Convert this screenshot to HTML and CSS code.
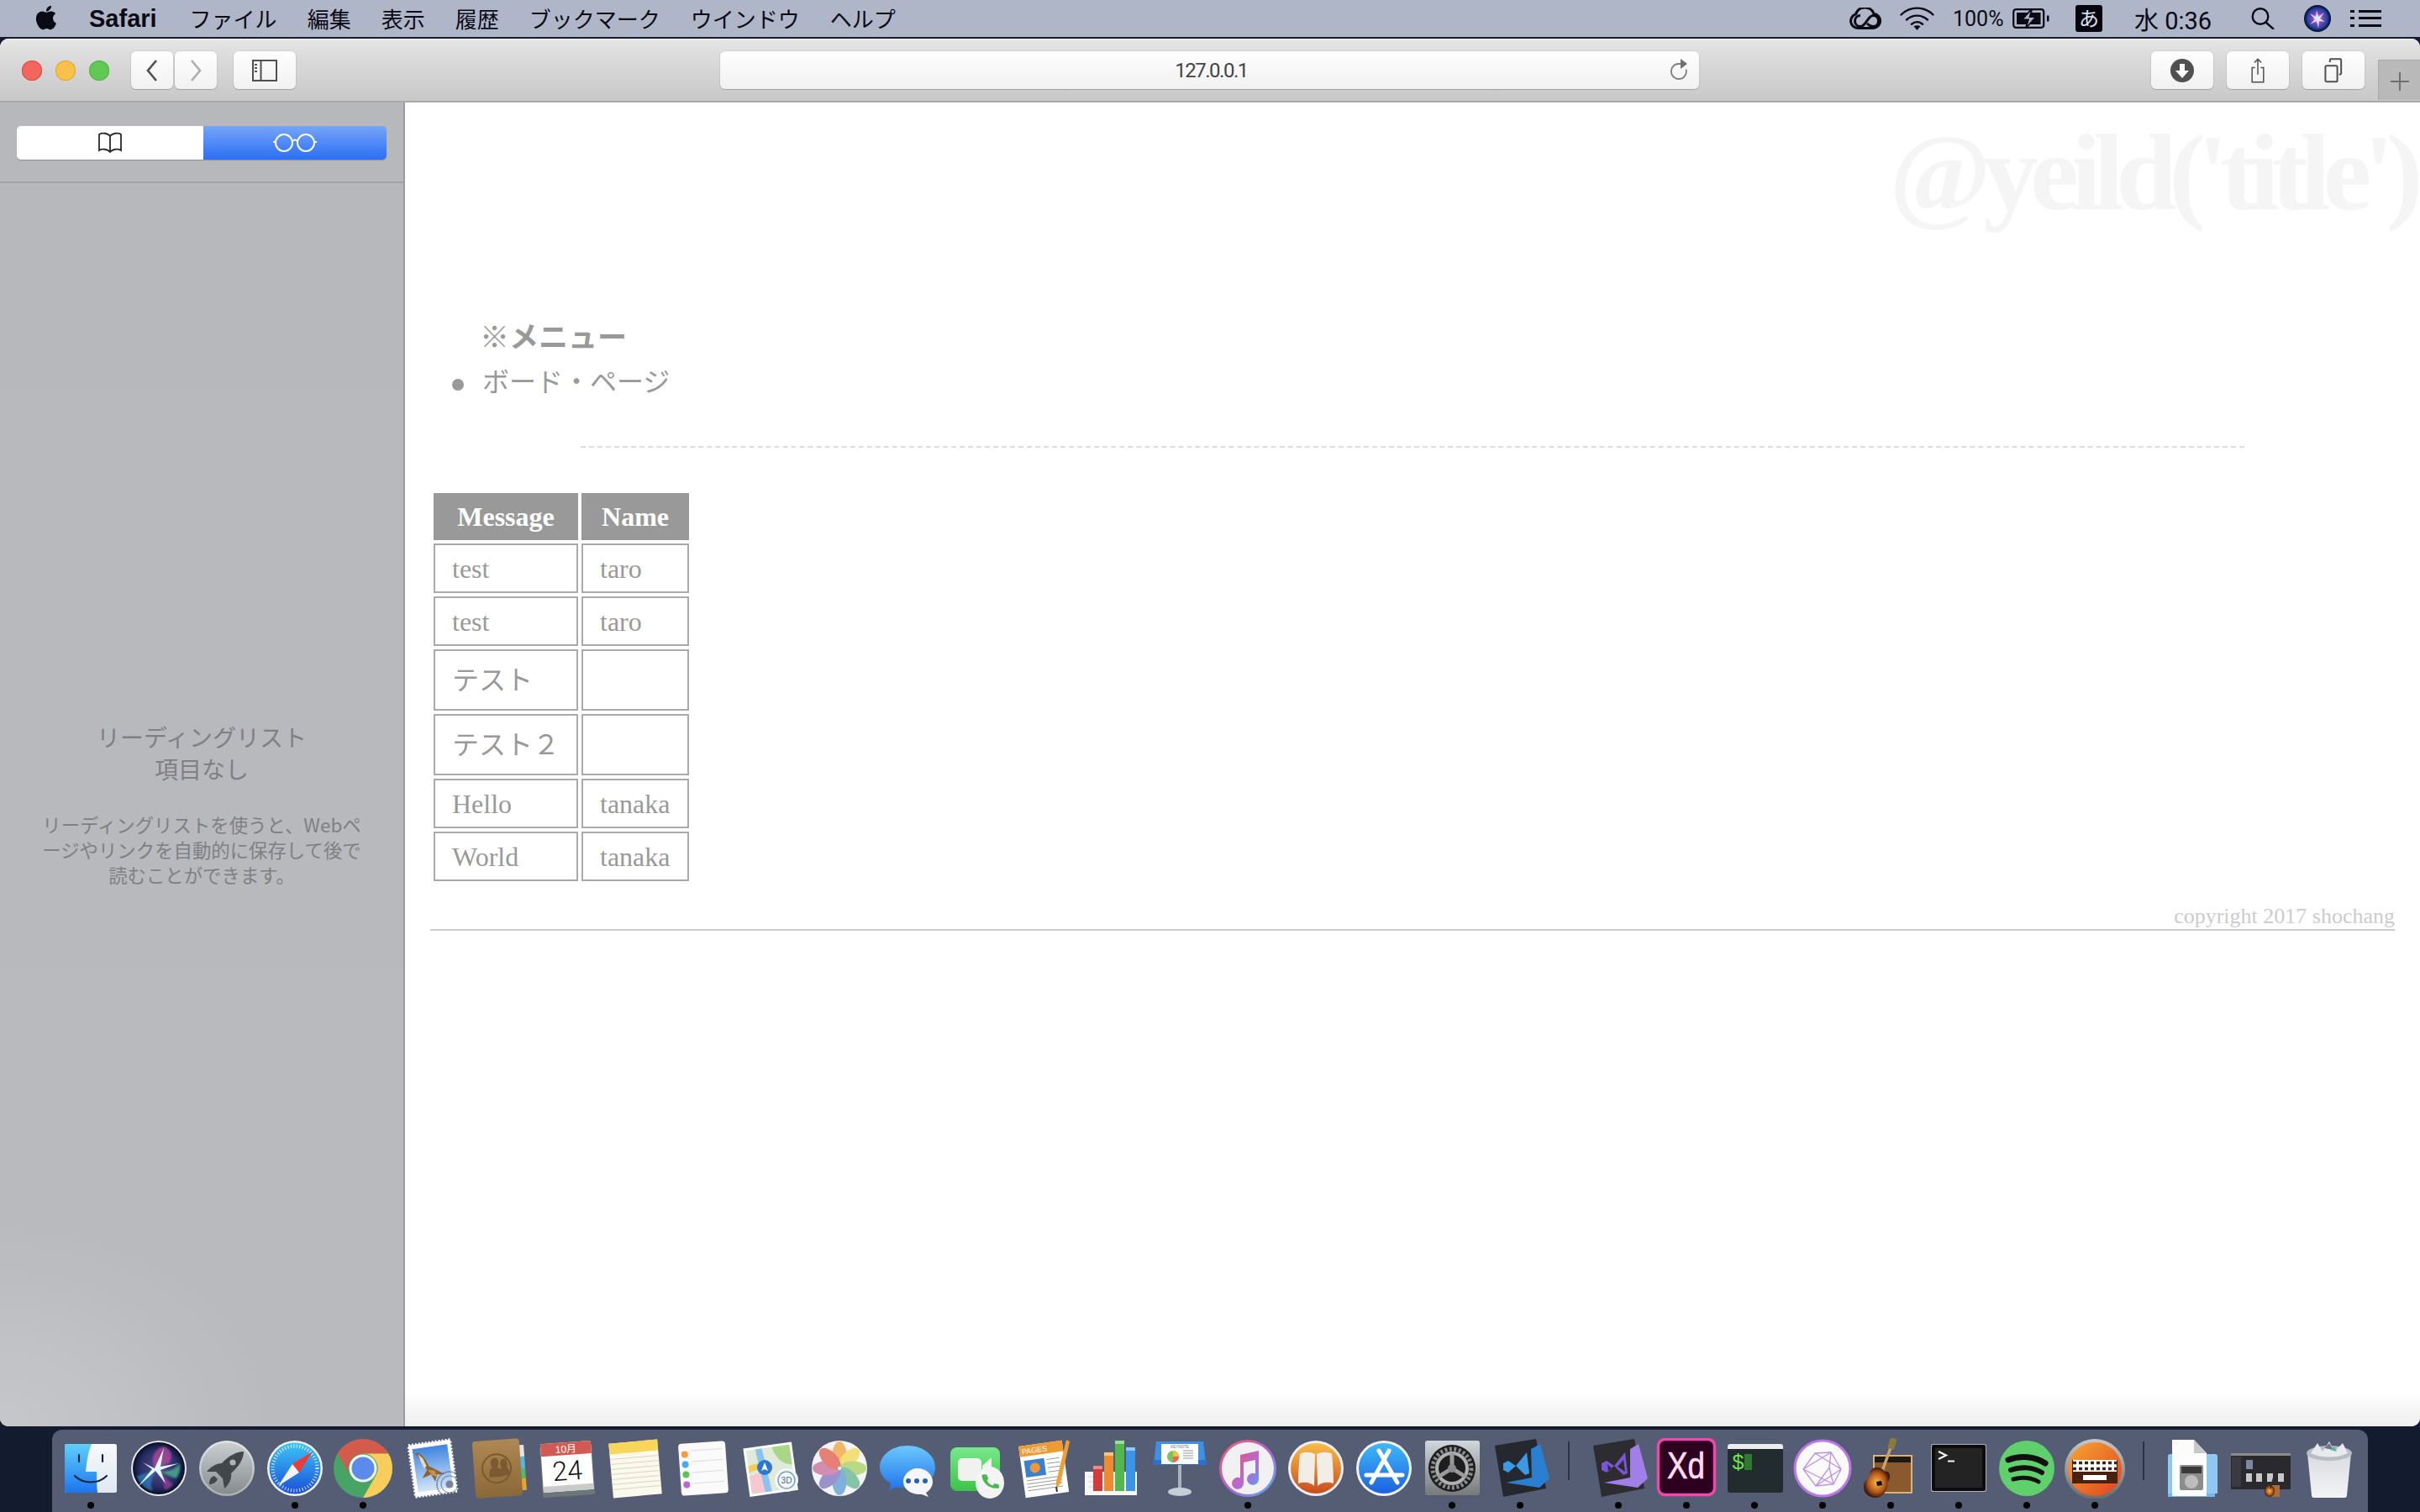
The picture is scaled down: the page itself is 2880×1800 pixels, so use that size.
FILE: index.html
```html
<!DOCTYPE html>
<html lang="ja">
<head>
<meta charset="utf-8">
<title>127.0.0.1</title>
<link rel="stylesheet" href="styles.css">
</head>
<body>
<svg class="defs" aria-hidden="true">
<defs>
<filter id="soft" x="-30%" y="-30%" width="160%" height="160%"><feGaussianBlur stdDeviation="1.2"/></filter>
<filter id="soft2" x="-30%" y="-30%" width="160%" height="160%"><feGaussianBlur stdDeviation=".5"/></filter>
<linearGradient id="fL" x1="0" y1="0" x2="0" y2="1"><stop offset="0" stop-color="#5fd0fb"/><stop offset="1" stop-color="#1d74ee"/></linearGradient>
<linearGradient id="fR" x1="0" y1="0" x2="0" y2="1"><stop offset="0" stop-color="#f7f8fa"/><stop offset="1" stop-color="#dfe8f2"/></linearGradient>
<radialGradient id="siri"><stop offset="0" stop-color="#51508f"/><stop offset=".75" stop-color="#2c2e66"/><stop offset="1" stop-color="#0d1a3d"/></radialGradient>
<linearGradient id="rock" x1="0" y1="0" x2="0" y2="1"><stop offset="0" stop-color="#e3e6e7"/><stop offset="1" stop-color="#a9aeaf"/></linearGradient>
<linearGradient id="rock2" x1="0" y1="0" x2="0" y2="1"><stop offset="0" stop-color="#c9cfd0"/><stop offset="1" stop-color="#868c8e"/></linearGradient>
<linearGradient id="safari" x1="0" y1="0" x2="0" y2="1"><stop offset="0" stop-color="#3cc6f8"/><stop offset="1" stop-color="#1a4fd6"/></linearGradient>
<linearGradient id="sky" x1="0" y1="0" x2="0" y2="1"><stop offset="0" stop-color="#3f85df"/><stop offset="1" stop-color="#d4e6f6"/></linearGradient>
<linearGradient id="brown" x1="0" y1="0" x2="0" y2="1"><stop offset="0" stop-color="#ad8853"/><stop offset="1" stop-color="#8b6838"/></linearGradient>
<linearGradient id="msg" x1="0" y1="0" x2="0" y2="1"><stop offset="0" stop-color="#6cc8fb"/><stop offset="1" stop-color="#1f72ec"/></linearGradient>
<linearGradient id="ft" x1="0" y1="0" x2="0" y2="1"><stop offset="0" stop-color="#78e88a"/><stop offset="1" stop-color="#3cc348"/></linearGradient>
<linearGradient id="itr" x1="0" y1="0" x2="1" y2="1"><stop offset="0" stop-color="#f0635a"/><stop offset=".5" stop-color="#b45fd4"/><stop offset="1" stop-color="#4fb6ee"/></linearGradient>
<linearGradient id="itn" x1="0" y1="0" x2="1" y2="1"><stop offset="0" stop-color="#f1536a"/><stop offset=".6" stop-color="#b36bd6"/><stop offset="1" stop-color="#4aa8f0"/></linearGradient>
<linearGradient id="book" x1="0" y1="0" x2="0" y2="1"><stop offset="0" stop-color="#f8bd48"/><stop offset="1" stop-color="#c94c1e"/></linearGradient>
<linearGradient id="app" x1="0" y1="0" x2="0" y2="1"><stop offset="0" stop-color="#3fb8f8"/><stop offset="1" stop-color="#1c62e0"/></linearGradient>
<linearGradient id="sys" x1="0" y1="0" x2="0" y2="1"><stop offset="0" stop-color="#cfd8db"/><stop offset="1" stop-color="#77797b"/></linearGradient>
<linearGradient id="kb" x1="0" y1="0" x2="1" y2="1"><stop offset="0" stop-color="#f6a833"/><stop offset="1" stop-color="#e0401f"/></linearGradient>
<linearGradient id="kbr" x1="0" y1="0" x2="0" y2="1"><stop offset="0" stop-color="#c8c8c8"/><stop offset="1" stop-color="#6a6a6a"/></linearGradient>
<linearGradient id="trash" x1="0" y1="0" x2="0" y2="1"><stop offset="0" stop-color="#d8dbe0"/><stop offset="1" stop-color="#f4f4f5"/></linearGradient>
<radialGradient id="guitar"><stop offset="0" stop-color="#f5bb45"/><stop offset=".65" stop-color="#b5561c"/><stop offset="1" stop-color="#3a1a0a"/></radialGradient>
<radialGradient id="msiri"><stop offset="0" stop-color="#a9d8ee"/><stop offset=".4" stop-color="#8a3fb8"/><stop offset=".72" stop-color="#2446a8"/><stop offset="1" stop-color="#05071c"/></radialGradient>
</defs>
</svg>

<header class="menubar">
  <svg class="apple" viewBox="0 0 24 24"><path d="M17.05 20.28c-.98.95-2.05.8-3.08.35-1.09-.46-2.09-.48-3.24 0-1.44.62-2.2.44-3.06-.35C2.79 15.25 3.51 7.59 9.05 7.31c1.35.07 2.29.74 3.08.8 1.18-.24 2.31-.93 3.57-.84 1.51.12 2.65.72 3.4 1.8-3.12 1.87-2.38 5.98.48 7.13-.57 1.5-1.31 2.99-2.54 4.09zM12.03 7.25c-.15-2.23 1.66-4.07 3.74-4.25.29 2.58-2.34 4.5-3.74 4.25z"/></svg>
  <nav class="menu-left">
    <span class="app-name">Safari</span>
    <span>ファイル</span><span>編集</span><span>表示</span><span>履歴</span><span>ブックマーク</span><span>ウインドウ</span><span>ヘルプ</span>
  </nav>
  <div class="menu-right">
    <svg class="st-cc" viewBox="0 0 38 26" fill="none" stroke="#0a0a14" stroke-width="3"><path d="M10 24.500a8.500 8.500 0 0 1-2.500-16.600A11.500 11.500 0 0 1 29 7.200a8.700 8.700 0 0 1-.5 17.300z"/><path d="M13 9.500c-4 0-6.500 3-6.500 6.500S9 22.500 13 22.500c6.500 0 9-13 15-13 4 0 6.500 3 6.500 6.500S32 22.500 28 22.500c-3 0-5-1.500-7-3.500"/></svg>
    <svg class="st-wifi" viewBox="0 0 41 28" fill="none" stroke="#0a0a14" stroke-width="2.400" stroke-linecap="round"><path d="M1.500 9.500C12 -1 29 -1 39.500 9.500"/><path d="M8 15.500c7-6.500 18-6.500 25 0"/><path d="M14 20.800c4-3.300 9-3.300 13 0"/><path d="M20.500 28l-4-4.800c2.500-1.400 5.500-1.400 8 0z" fill="#0a0a14" stroke="none"/></svg>
    <span class="st-pct">100%</span>
    <svg class="st-batt" viewBox="0 0 44 24" fill="none" stroke="#0a0a14" stroke-width="2.200"><rect x="1.200" y="1.200" width="36" height="21.600" rx="3"/><rect x="5" y="5" width="28.500" height="14" fill="#0a0a14" stroke="none"/><path d="M41 8.500h2.500v7H41z" fill="#0a0a14" stroke="none"/><path d="M23.500 0L11.500 13.500h7.500L15.500 24 28 10h-7.500z" fill="#afb6c8" stroke="#0a0a14" stroke-width="1.800"/></svg>
    <span class="st-ime">あ</span>
    <span class="st-time">水 0:36</span>
    <svg class="st-search" viewBox="0 0 30 26" fill="none" stroke="#0a0a14" stroke-width="2.400"><circle cx="12" cy="10.500" r="9.300"/><path d="M18.500 17.500L28 26"/></svg>
    <svg class="st-siri" viewBox="0 0 32 32"><circle cx="16" cy="16" r="16" fill="url(#msiri)"/><path d="M15 6l2 8 7-5-5 7 6 4-7-1-1 9-2-9-8 4 6-6-6-7 7 4z" fill="#e8f4fa" opacity=".85" filter="url(#soft2)"/></svg>
    <svg class="st-list" viewBox="0 0 37 20" fill="#0a0a14"><rect x="0" y="0" width="5" height="3"/><rect x="10" y="0" width="27" height="3"/><rect x="0" y="8" width="5" height="3"/><rect x="10" y="8" width="27" height="3"/><rect x="0" y="17" width="5" height="3"/><rect x="10" y="17" width="27" height="3"/></svg>
  </div>
</header>

<div class="window">
  <div class="toolbar">
    <i class="light red"></i><i class="light yellow"></i><i class="light green"></i>
    <button class="tb back"><svg viewBox="0 0 16 26" fill="none" stroke="#505050" stroke-width="2.600"><path d="M13 1L3 13l10 12"/></svg></button>
    <button class="tb forward"><svg viewBox="0 0 16 26" fill="none" stroke="#adadad" stroke-width="2.600"><path d="M3 1l10 12L3 25"/></svg></button>
    <button class="tb toggle"><svg viewBox="0 0 30 26" fill="none" stroke="#505050" stroke-width="2"><rect x="1" y="1" width="28" height="24"/><path d="M10.500 1v24"/><path d="M3 6h5M3 10h5M3 14h5" stroke-dasharray="3 2"/></svg></button>
    <div class="url">
      <span class="url-text">127.0.0.1</span>
      <svg class="reload" viewBox="0 0 22 26" fill="none" stroke="#808080" stroke-width="1.800"><path d="M18.500 12.500a9 9 0 1 1-9-6.500h3"/><path d="M12 0l8 6-8 6z" fill="#707070" stroke="none"/></svg>
    </div>
    <div class="tb-right">
      <button class="tb wide"><svg viewBox="0 0 28 28"><circle cx="14" cy="14" r="14" fill="#505050"/><path d="M11 6h6v8h5l-8 9-8-9h5z" fill="#fff"/></svg></button>
      <button class="tb wide"><svg viewBox="0 0 24 44" fill="none" stroke="#505050" stroke-width="2.200"><path d="M7 17H2v25h20V17h-5"/><path d="M12 29V2M6 8l6-6 6 6"/></svg></button>
      <button class="tb wide"><svg viewBox="0 0 26 36" fill="none" stroke="#505050" stroke-width="2.400"><rect x="1.500" y="11" width="17" height="23" rx="2"/><path d="M8 6V3a1.500 1.500 0 0 1 1.500-1.500h13A1.500 1.500 0 0 1 24 3v19a1.500 1.500 0 0 1-1.500 1.500H21"/></svg></button>
    </div>
    <div class="newtab"><svg viewBox="0 0 24 24" fill="none" stroke="#6f6f6f" stroke-width="2"><path d="M12 1v22M1 12h22"/></svg></div>
  </div>

  <div class="content">
    <aside class="sidebar">
      <div class="side-head">
        <div class="segment">
          <div class="seg seg-on"><svg viewBox="0 0 32 26" fill="none" stroke="#2a2a2a" stroke-width="1.800"><path d="M16 5C13 1 6 1 3 3v19c3-2 10-2 13 2 3-4 10-4 13-2V3c-3-2-10-2-13 2z"/><path d="M16 5v19"/></svg></div>
          <div class="seg seg-blue"><svg viewBox="0 0 52 24" fill="none" stroke="#fff" stroke-width="2"><circle cx="13" cy="12" r="10"/><circle cx="39" cy="12" r="10"/><path d="M23 10q3-3 6 0M0 11h3M49 11h3"/></svg></div>
        </div>
      </div>
      <div class="empty">
        <p class="empty-title">リーディングリスト<br>項目なし</p>
        <p class="empty-desc">リーディングリストを使うと、Webペ<br>ージやリンクを自動的に保存して後で<br>読むことができます。</p>
      </div>
    </aside>

    <main class="page">
      <h1 class="ghost">@yeild('title')</h1>
      <section class="nav-block">
        <h3 class="nav-title">※メニュー</h3>
        <ul class="nav-list"><li>ボード・ページ</li></ul>
      </section>
      <hr class="dash">
      <table class="board">
        <thead><tr><th class="col-msg">Message</th><th class="col-name">Name</th></tr></thead>
        <tbody>
          <tr><td>test</td><td>taro</td></tr>
          <tr><td>test</td><td>taro</td></tr>
          <tr class="tall"><td>テスト</td><td></td></tr>
          <tr class="tall"><td>テスト２</td><td></td></tr>
          <tr><td>Hello</td><td>tanaka</td></tr>
          <tr><td>World</td><td>tanaka</td></tr>
        </tbody>
      </table>
      <footer class="copy">copyright 2017 shochang</footer>
    </main>
  </div>
</div>

<div class="dock">
  <div class="item on"><svg viewBox="0 0 72 72"><rect x="5" y="7" width="62" height="58" rx="2.500" fill="url(#fR)"/><path d="M7.500 7H37C33 16 31 29 30 40h13c0 9 0 17 1 25H7.500A2.500 2.500 0 0 1 5 62.500v-53A2.500 2.500 0 0 1 7.500 7z" fill="url(#fL)"/><path d="M22 20v8M50 20v8M17 45c10 10 28 10 38 0" fill="none" stroke="#16283f" stroke-width="2.200" stroke-linecap="round"/></svg></div>
  <div class="item"><svg viewBox="0 0 72 72"><circle cx="36" cy="36" r="33" fill="#e9e9ea"/><circle cx="36" cy="36" r="31" fill="#0f1226"/><circle cx="36" cy="36" r="29" fill="url(#siri)"/><g filter="url(#soft)"><path d="M31 36C26 24 30 13 42 10c9 3 12 12 6 20z" fill="#b0479c" opacity=".8"/><path d="M33 38c8 4 20 2 28-8 1 8-1 14-5 18z" fill="#49b98d" opacity=".75"/><path d="M33 38c-6 10-8 18-4 25-8-2-16-8-19-18z" fill="#2e7fbf" opacity=".75"/><path d="M33 38c6 6 9 15 10 24 4-1 8-4 10-7z" fill="#9c3f9c" opacity=".7"/></g><path d="M31 36L42 12l-4 22 22-4-22 8 6 16-12-15-21 19 17-21-11-8z" fill="#e4f6fa" filter="url(#soft2)"/></svg></div>
  <div class="item"><svg viewBox="0 0 72 72"><circle cx="36" cy="36" r="33" fill="url(#rock)"/><circle cx="36" cy="36" r="30.500" fill="url(#rock2)"/><path d="M56 16C48 16 38 21 30 30 24 30 17 34 12 40h11l8 8 2 12c6-5 9-12 8-18C50 34 56 25 56 16z" fill="#43464b"/><path d="M21 45c-4 1-6 5-6 10 4 0 8-2 10-6z" fill="#43464b"/><circle cx="43" cy="29" r="3.600" fill="#aeb4b6"/></svg></div>
  <div class="item on"><svg viewBox="0 0 72 72"><circle cx="36" cy="36" r="33" fill="#f2f3f4"/><circle cx="36" cy="36" r="30.500" fill="url(#safari)"/><circle cx="36" cy="36" r="26.500" fill="none" stroke="#fff" stroke-width="4" stroke-dasharray="1 2.500" opacity=".85"/><path d="M57 16L33 31l8 10z" fill="#ee3b36"/><path d="M16 57l17-26 8 10z" fill="#f4f4f4"/></svg></div>
  <div class="item on"><svg viewBox="0 0 72 72"><circle cx="36" cy="36" r="35" fill="#48a465"/><path d="M5.700 18.500A35 35 0 0 1 66.300 18.500H36a17.500 17.500 0 0 0-15.200 26.200z" fill="#d25b4b"/><path d="M66.300 18.500A35 35 0 0 1 36 71L51.200 44.800A17.500 17.500 0 0 0 36 18.500z" fill="#f9cd5c"/><circle cx="36" cy="36" r="16.500" fill="#f5f5f5"/><circle cx="36" cy="36" r="13.500" fill="#5b8cec"/></svg></div>
  <div class="item"><svg viewBox="0 0 72 72"><g transform="rotate(-8 38 36)"><rect x="13" y="5" width="50" height="62" fill="#fff" stroke="#fff" stroke-width="3" stroke-dasharray="2 2"/><rect x="17" y="10" width="42" height="52" fill="url(#sky)"/><path d="M19 15l6 1 5 7 4 10 9 6 8 6-9-1-3 8-4-9-11 3 7-9-5-10-4-8z" fill="#8c6434"/><path d="M23 17l5 6 3 9-3 3-3-9z" fill="#e8dcc4"/><path d="M32 37l8 2 2 8-6-3z" fill="#c2914e"/></g><circle cx="58" cy="55" r="15" fill="none" stroke="#535d79" stroke-width="2" stroke-dasharray="1.500 1" opacity=".8"/><circle cx="58" cy="55" r="10" fill="none" stroke="#535d79" stroke-width="1.200" opacity=".6"/><circle cx="58" cy="55" r="4.500" fill="#535d79" opacity=".7"/></svg></div>
  <div class="item"><svg viewBox="0 0 72 72"><g transform="rotate(-4 36 36)"><rect x="58" y="10" width="9" height="14" fill="#e4e4e4"/><rect x="58" y="24" width="9" height="14" fill="#55b8dd"/><rect x="58" y="38" width="9" height="12" fill="#54b870"/><rect x="58" y="50" width="9" height="14" fill="#e8a42c"/><rect x="6" y="2" width="56" height="68" rx="4" fill="url(#brown)"/><circle cx="33" cy="36" r="17" fill="none" stroke="#7a5a2e" stroke-width="2"/><path d="M24 46c0-8 1-10 4-11-3-5-2-12 3-12s6 7 3 12c3 1 5 3 5 11z" fill="#7a5a2e"/><path d="M36 46c0-7 1-9 3-10-2-4-2-11 3-11 4 0 5 7 3 11 2 1 3 3 3 8z" fill="#7a5a2e"/></g></svg></div>
  <div class="item"><svg viewBox="0 0 72 72"><g transform="rotate(-4 36 36)"><rect x="5" y="8" width="62" height="61" rx="2" fill="#6d7779"/><rect x="6" y="5" width="60" height="58" fill="#fff"/><rect x="6" y="5" width="60" height="15" fill="#d35a52"/><text class="ic-sans" x="36" y="17" font-size="12" fill="#fff" text-anchor="middle">10月</text><text class="ic-thin" x="36" y="50" font-size="32" fill="#111" text-anchor="middle">24</text><rect x="6" y="56" width="60" height="7" fill="#c9cbcb"/></g></svg></div>
  <div class="item"><svg viewBox="0 0 72 72"><g transform="rotate(-5 36 36)"><rect x="7" y="4" width="58" height="65" fill="#fbf8ec"/><rect x="7" y="4" width="58" height="13" fill="#f7d65a"/><path d="M7 23h58M7 29h58M7 35h58M7 41h58M7 47h58M7 53h58M7 59h58" stroke="#d8d4c8" stroke-width="1"/></g></svg></div>
  <div class="item"><svg viewBox="0 0 72 72"><g transform="rotate(-4 36 36)"><rect x="8" y="5" width="56" height="62" rx="4" fill="#fafafa"/><path d="M22 14h38M22 27h38M22 40h38M22 53h38" stroke="#dcdcdc" stroke-width="1"/><circle cx="15" cy="18" r="4" fill="#f79a3e"/><circle cx="15" cy="30" r="4" fill="#4aa8ec"/><circle cx="15" cy="42" r="4" fill="#5ec45a"/><circle cx="15" cy="54" r="4" fill="#b26ad8"/></g></svg></div>
  <div class="item"><svg viewBox="0 0 72 72"><g transform="rotate(-8 36 36)"><rect x="6" y="8" width="58" height="58" fill="#fff"/><rect x="9" y="11" width="52" height="52" fill="#dfeadb"/><path d="M40 11h21v24C50 33 42 24 40 11z" fill="#a9d787"/><path d="M9 42l16-4 3 25H9z" fill="#f7c8d0"/><path d="M20 11h8l5 52h-8z" fill="#8cc3ee"/><path d="M9 30c10-4 22-2 28 6l-3 5c-7-6-16-7-25-3z" fill="#f6cb57"/></g><circle cx="28" cy="35" r="9" fill="#2a78d2"/><path d="M28 29l4 10-4-2-4 2z" fill="#fff"/><circle cx="54" cy="50" r="14" fill="#f3f5f6"/><circle cx="54" cy="50" r="10" fill="none" stroke="#7aa4c0" stroke-width="1.500"/><text class="ic-sans" x="54" y="54" font-size="10" fill="#47708c" text-anchor="middle">3D</text></svg></div>
  <div class="item"><svg viewBox="0 0 72 72"><circle cx="36" cy="36" r="33" fill="#f4f4f4"/><g opacity=".75"><ellipse cx="36" cy="20" rx="8.500" ry="16" fill="#f0a23c"/><ellipse cx="36" cy="20" rx="8.500" ry="16" fill="#f4d84e" transform="rotate(45 36 36)"/><ellipse cx="36" cy="20" rx="8.500" ry="16" fill="#a8cf5c" transform="rotate(90 36 36)"/><ellipse cx="36" cy="20" rx="8.500" ry="16" fill="#62b58e" transform="rotate(135 36 36)"/><ellipse cx="36" cy="20" rx="8.500" ry="16" fill="#5a9bd6" transform="rotate(180 36 36)"/><ellipse cx="36" cy="20" rx="8.500" ry="16" fill="#7c72c0" transform="rotate(225 36 36)"/><ellipse cx="36" cy="20" rx="8.500" ry="16" fill="#c86a9c" transform="rotate(270 36 36)"/><ellipse cx="36" cy="20" rx="8.500" ry="16" fill="#e2594c" transform="rotate(315 36 36)"/></g><circle cx="36" cy="36" r="2" fill="#fff"/></svg></div>
  <div class="item"><svg viewBox="0 0 72 72"><path d="M36 11c18 0 33 11 33 26 0 11-8 20-18 24H20l-7 4c2-3 3-6 3-9C8 51 3 44 3 37c0-15 15-26 33-26z" transform="translate(0 -2)" fill="url(#msg)"/><path d="M48 36c10 0 18 7 18 16 0 5-3 10-8 13l3 5-8-3c-11 1-22-5-22-15 0-9 8-16 17-16z" fill="#f4f6f9"/><circle cx="37" cy="51" r="3" fill="#2b5fa8"/><circle cx="47" cy="51" r="3" fill="#2b5fa8"/><circle cx="57" cy="51" r="3" fill="#2b5fa8"/></svg></div>
  <div class="item"><svg viewBox="0 0 72 72"><rect x="6" y="11" width="59" height="52" rx="8" fill="url(#ft)"/><rect x="15" y="24" width="28" height="27" rx="5" fill="#f0f2f0"/><path d="M44 33l11-10v32L44 45z" fill="#f0f2f0"/><ellipse cx="53" cy="53" rx="17" ry="19" fill="#f3f4f3"/><path d="M47 42l4 1 1 5-2 2c1 3 3 6 6 7l2-2 5 2v4c-10 1-19-8-18-18z" transform="rotate(-10 53 53)" fill="#47b94e"/></svg></div>
  <div class="item"><svg viewBox="0 0 72 72"><g transform="rotate(-8 36 36)"><rect x="10" y="6" width="52" height="62" fill="#fff"/><rect x="10" y="6" width="52" height="13" fill="#f09a34"/><text class="ic-sans" x="13" y="16" font-size="9" fill="#fff">PAGES</text><rect x="14" y="24" width="24" height="20" fill="#3a80cf"/><circle cx="26" cy="34" r="6" fill="#f2963a"/><path d="M14 48h42M14 52h42M14 56h42M14 60h42M41 26h15M41 31h15M41 36h15M41 41h15" stroke="#9a9a9a" stroke-width="1"/></g><path d="M63 2l4 2-11 50-5 6 0-8z" fill="#f0a030"/><path d="M51 58l1 6" stroke="#333" stroke-width="2"/></svg></div>
  <div class="item"><svg viewBox="0 0 72 72"><path d="M4 40h62v28H4z" fill="#f7f7f7"/><path d="M8 46h56M8 52h56M8 58h56" stroke="#d6d6d6"/><rect x="14" y="36" width="11" height="27" fill="#d43c3c"/><rect x="14" y="33" width="11" height="4" fill="#ef8b82"/><rect x="27" y="20" width="11" height="43" fill="#ee8a2f"/><rect x="27" y="17" width="11" height="4" fill="#f8c47c"/><rect x="40" y="6" width="11" height="57" fill="#52b84e"/><rect x="40" y="3" width="11" height="4" fill="#9be08d"/><rect x="53" y="14" width="11" height="49" fill="#3c94e8"/><rect x="53" y="11" width="11" height="4" fill="#8cc8f8"/></svg></div>
  <div class="item"><svg viewBox="0 0 72 72"><path d="M8 4h56l3 26H5z" fill="#3e8fe6"/><rect x="4" y="26" width="64" height="6" rx="1" fill="#2a70cc"/><rect x="14" y="7" width="44" height="24" fill="#fdfdfd"/><text class="ic-sans" x="36" y="11.500" font-size="4.500" fill="#777" text-anchor="middle">KEYNOTE</text><circle cx="28" cy="22" r="7" fill="#7cc35c"/><path d="M28 22v-7a7 7 0 0 1 7 7z" fill="#f0c040"/><path d="M28 22h7a7 7 0 0 1-7 7z" fill="#e8645a"/><path d="M40 15h12M40 18h12M40 21h12M40 24h12" stroke="#bbb" stroke-width="1.500"/><rect x="34" y="32" width="4" height="30" fill="#a8b3bd"/><ellipse cx="36" cy="64" rx="14" ry="5" fill="#c3ced6"/></svg></div>
  <div class="item on"><svg viewBox="0 0 72 72"><circle cx="36" cy="36" r="34" fill="url(#itr)"/><circle cx="36" cy="36" r="31" fill="#f1f0f3"/><path d="M27 20l22-5v34a7 7 0 1 1-4-6.500V26l-14 3v25a7 7 0 1 1-4-6.500z" fill="url(#itn)"/></svg></div>
  <div class="item"><svg viewBox="0 0 72 72"><circle cx="36" cy="36" r="33" fill="#f1f1f1"/><circle cx="36" cy="36" r="30" fill="url(#book)"/><path d="M35 19c-6-3-14-3-18 0-1 9-2 24-2 35 6-2 14-2 19 3 0-13 1-25 1-38zM37 19c6-3 14-3 18 0 1 9 2 24 2 35-6-2-14-2-19 3 0-13-1-25-1-38z" fill="#f2ede6"/></svg></div>
  <div class="item"><svg viewBox="0 0 72 72"><circle cx="36" cy="36" r="33" fill="#f4f4f6"/><circle cx="36" cy="36" r="30" fill="url(#app)"/><path d="M30 15l22 38M42 15L21 53M15 44h42M48 44h10" fill="none" stroke="#fff" stroke-width="5" stroke-linecap="round"/></svg></div>
  <div class="item on"><svg viewBox="0 0 72 72"><rect x="4" y="3" width="65" height="65" rx="3" fill="url(#sys)"/><circle cx="36" cy="36" r="28" fill="#1e1e20"/><circle cx="36" cy="36" r="23" fill="none" stroke="#8b8b8b" stroke-width="5" stroke-dasharray="3 2.500"/><circle cx="36" cy="36" r="18" fill="none" stroke="#b0b0b0" stroke-width="4"/><path d="M36 36V18M36 36L20 46M36 36l16 10" stroke="#9a9a9a" stroke-width="5"/><circle cx="36" cy="36" r="5" fill="#8a8a8a"/></svg></div>
  <div class="item on"><svg viewBox="0 0 72 72"><path d="M6 9l49-8 12 59-51 10z" fill="#25282e"/><path d="M49 13l11-6 11 41-12 11-40-6 31-6z" fill="#2a7fd1"/><path d="M16 30l6-3 9 6 13-16 3 25-5 2-11-11-9 8-6-3z" fill="#3b99e6"/></svg></div>
  <div class="sep"></div>
  <div class="item on"><svg viewBox="0 0 72 72"><path d="M6 9l49-8 12 59-51 10z" fill="#2c2c31"/><path d="M50 13l10-6 11 41-12 11-40-6 31-6z" fill="#a27fe8"/><path d="M16 30l6-3 9 6 13-16 3 25-5 2-11-11-9 8-6-3zM23 31l5 5-4 4zM42 26l-7 8 9 6z" fill="#7a56d6" fill-rule="evenodd"/></svg></div>
  <div class="item on"><svg viewBox="0 0 72 72"><rect x="2.500" y="1.500" width="67" height="66" rx="8" fill="#2c001e" stroke="#ef47ae" stroke-width="3.500"/><text class="ic-sans" x="13" y="48" font-size="45" fill="#ffdcf2" stroke="#ffdcf2" stroke-width=".7" textLength="45" lengthAdjust="spacingAndGlyphs">Xd</text></svg></div>
  <div class="item on"><svg viewBox="0 0 72 72"><rect x="4" y="7" width="66" height="58" rx="3" fill="#222c2e"/><path d="M4 10a3 3 0 0 1 3-3h60a3 3 0 0 1 3 3v3H4z" fill="#ececec"/><text class="ic-mono" x="9" y="37" font-size="25" fill="#6fe34b">$</text><rect x="24" y="19" width="9" height="19" fill="#2f7a2f"/></svg></div>
  <div class="item on"><svg viewBox="0 0 72 72"><circle cx="36" cy="36" r="33" fill="#fafafa" stroke="#bd74e8" stroke-width="3"/><path d="M27 18L46 17 58 37 49 55 28 57 13 37zM13 37L46 17M27 18L58 37M28 57L58 37M13 37L49 55M46 17L44 35 28 57M44 35L49 55" fill="none" stroke="#bb8fe6" stroke-width="1.300"/></svg></div>
  <div class="item on"><svg viewBox="0 0 72 72"><rect x="16" y="21" width="45" height="44" fill="#8a5a2e" stroke="#d9b27c" stroke-width="2"/><rect x="17" y="22" width="43" height="7" fill="#1f1a14"/><path d="M25 42L37 9" stroke="#c9a46a" stroke-width="3.500"/><rect x="34" y="0" width="8" height="13" fill="#8a7a3a" transform="rotate(15 38 6)"/><path d="M19 35c5 0 8 2 10 5 4-1 6 2 6 5 0 4-1 6-3 8 1 6-3 17-13 18C10 71 4 66 4 58c0-6 3-9 7-11-1-6 2-12 8-12z" fill="url(#guitar)"/><path d="M19 52l6-1 1 5-6 1z" fill="#111"/></svg></div>
  <div class="item on"><svg viewBox="0 0 72 72"><rect x="3" y="7" width="66" height="57" rx="2.500" fill="#aab0bc"/><rect x="4" y="8" width="64" height="55" rx="2" fill="#0c0c0c"/><rect x="8" y="12" width="56" height="47" fill="#232323"/><path d="M12 16l9 4.500-9 4.500" fill="none" stroke="#f4f4f4" stroke-width="2.200"/><path d="M23 27.500h8" stroke="#f4f4f4" stroke-width="2"/></svg></div>
  <div class="item on"><svg viewBox="0 0 72 72"><ellipse cx="36" cy="36" rx="33" ry="33" fill="#5fd06c"/><path d="M14 26c15-6 32-4 44 4" fill="none" stroke="#111" stroke-width="7" stroke-linecap="round"/><path d="M17 38c13-5 27-3 37 3" fill="none" stroke="#111" stroke-width="6" stroke-linecap="round"/><path d="M20 49c10-3 22-2 30 3" fill="none" stroke="#111" stroke-width="5" stroke-linecap="round"/></svg></div>
  <div class="item on"><svg viewBox="0 0 72 72"><circle cx="36" cy="37" r="36" fill="url(#kbr)"/><circle cx="36" cy="37" r="32" fill="url(#kb)"/><rect x="9" y="26" width="54" height="28" fill="#4a2010"/><rect x="10" y="26" width="52" height="14" fill="#fff"/><path d="M10 29.500h52M10 36.500h52" stroke="#4a2010" stroke-width="3.500" stroke-dasharray="4 3"/><rect x="22" y="44" width="28" height="6" fill="#fff"/></svg></div>
  <div class="sep"></div>
  <div class="item"><svg viewBox="0 0 72 72"><path d="M6 20h56v50H6z" fill="#73b6ec"/><path d="M6 22a3 3 0 0 1 3-3h53a3 3 0 0 1 3 3v44H6z" fill="#90c8f2"/><path d="M11 2h26l15 16v51H11z" fill="#fcfcfc"/><path d="M37 2v16h15z" fill="#c8c8c8"/><rect x="20" y="32" width="28" height="30" rx="2" fill="#8c8c8c"/><rect x="22" y="34" width="24" height="8" fill="#3a3a3a"/><circle cx="34" cy="52" r="8" fill="#bdbdbd"/></svg></div>
  <div class="item"><svg viewBox="0 0 72 72"><rect x="0" y="18" width="71" height="43" fill="#2a2a2e"/><rect x="0" y="18" width="71" height="3" fill="#8c8c8c"/><rect x="1" y="22" width="11" height="36" fill="#3a3a42"/><rect x="18" y="26" width="8" height="11" fill="#7a8aa0"/><rect x="18" y="42" width="7" height="10" fill="#c8c8c8"/><rect x="30" y="42" width="7" height="10" fill="#c8c8c8"/><rect x="43" y="42" width="7" height="10" fill="#c8c8c8"/><rect x="56" y="42" width="7" height="10" fill="#c8c8c8"/><rect x="44" y="56" width="14" height="14" fill="#a76e3c"/><ellipse cx="46" cy="63" rx="6" ry="7" fill="url(#guitar)"/><path d="M47 60l4-14" stroke="#3a2a1a" stroke-width="1.500"/></svg></div>
  <div class="item"><svg viewBox="0 0 72 72"><path d="M10 18h52l-5 50a3 3 0 0 1-3 3H18a3 3 0 0 1-3-3z" fill="url(#trash)"/><ellipse cx="36" cy="18" rx="27" ry="9" fill="#b9bdc4"/><path d="M14 18l8-12 6 10 8-12 6 12 10-10 6 12c-12 6-32 6-44 0z" fill="#e8eaed"/><path d="M30 12l6-6 5 8z" fill="#6c7685"/><path d="M37 14l5-4 3 6z" fill="#5fb0a8"/></svg></div>
</div>
</body>
</html>
```

FILE: styles.css
```css
* { box-sizing: border-box; }
html, body { margin: 0; padding: 0; }
body {
  width: 2880px;
  height: 1800px;
  overflow: hidden;
  background: #131b2e;
  font-family: "Noto Sans CJK JP", "Noto Sans", sans-serif;
  display: flex;
  flex-direction: column;
}
.defs { position: absolute; width: 0; height: 0; }

/* menu bar */
.menubar {
  height: 44px;
  flex: none;
  background: #afb6c8;
  color: #0a0a14;
  display: flex;
  align-items: center;
  font-size: 26px;
  padding-left: 36px;
}
.apple { width: 38px; height: 38px; fill: #0a0a14; flex: none; margin-top: -3px; }
.menu-left { display: flex; gap: 36px; margin-left: 32px; align-items: center; line-height: 44px; }
.app-name { font-family: "Liberation Sans", sans-serif; font-weight: 700; font-size: 29px; margin-right: 3px; }
.menu-right { margin-left: auto; display: flex; align-items: center; padding-right: 46px; }
.st-cc { width: 38px; height: 26px; }
.st-wifi { width: 41px; height: 28px; margin-left: 22px; }
.st-pct { font-family: Roboto, sans-serif; font-size: 25px; margin-left: 22px; width: 61px; }
.st-batt { width: 44px; height: 24px; margin-left: 10px; }
.st-ime { width: 32px; height: 32px; margin-left: 31px; background: #05050f; color: #dfe3ee; border-radius: 3px; font-size: 24px; line-height: 30px; text-align: center; }
.st-time { font-family: Roboto, "Noto Sans CJK JP", sans-serif; font-size: 29px; margin-left: 38px; width: 92px; white-space: nowrap; }
.st-search { width: 30px; height: 26px; margin-left: 46px; }
.st-siri { width: 32px; height: 32px; margin-left: 34px; }
.st-list { width: 37px; height: 20px; margin-left: 23px; }

/* window */
.window {
  margin-top: 2px;
  height: 1652px;
  flex: none;
  border-radius: 10px;
  overflow: hidden;
  display: flex;
  flex-direction: column;
  background: #fff;
}
.toolbar {
  height: 76px;
  flex: none;
  display: flex;
  align-items: flex-start;
  padding: 14px 0 0 26px;
  background: linear-gradient(#e6e6e6, #dcdcdc 25%, #c8c8c8);
  border-top: 1px solid #f0f0f0;
  border-bottom: 2px solid #a9a9a9;
}
.light { width: 24px; height: 24px; border-radius: 50%; flex: none; margin: 11px 16px 0 0; }
.red { background: #f2665c; box-shadow: inset 0 0 0 1px #e0483e; }
.yellow { background: #f9c149; box-shadow: inset 0 0 0 1px #e0a634; }
.green { background: #60c954; box-shadow: inset 0 0 0 1px #4fb344; }
.tb {
  height: 45px;
  border: 0;
  padding: 0;
  border-radius: 6px;
  background: linear-gradient(#fefefe, #f1f1f1);
  box-shadow: 0 1px 1px #a4a4a4, 0 0 0 1px rgba(0,0,0,.05);
  display: flex;
  align-items: center;
  justify-content: center;
  flex: none;
}
.back { width: 50px; margin-left: 10px; }
.forward { width: 50px; margin-left: 2px; }
.toggle { width: 74px; margin-left: 20px; }
.back svg, .forward svg { width: 16px; height: 26px; }
.toggle svg { width: 30px; height: 26px; }
.url {
  width: 1165px;
  height: 45px;
  margin-left: 505px;
  flex: none;
  border-radius: 6px;
  background: linear-gradient(#fefefe, #f1f1f1);
  box-shadow: 0 1px 1px #a4a4a4, 0 0 0 1px rgba(0,0,0,.05);
  display: flex;
  align-items: center;
  justify-content: center;
  position: relative;
}
.url-text { font-family: Roboto, sans-serif; font-size: 24px; letter-spacing: -1.500px; color: #454545; padding-left: 4px; }
.reload { position: absolute; right: 12px; top: 9px; width: 22px; height: 26px; }
.tb-right { margin-left: auto; display: flex; gap: 16px; }
.wide { width: 74px; }
.wide svg { width: 28px; height: 30px; }
.newtab {
  width: 50px;
  height: 48px;
  margin: 10px 0 0 16px;
  flex: none;
  background: #b9b9b9;
  border-left: 1px solid #aaa;
  border-top: 1px solid #aaa;
  display: flex;
  align-items: center;
  justify-content: center;
  padding-top: 3px;
}
.newtab svg { width: 24px; height: 24px; }

.content { flex: 1; display: flex; min-height: 0; }

/* sidebar */
.sidebar {
  width: 482px;
  flex: none;
  display: flex;
  flex-direction: column;
  border-right: 2px solid #9c9ca0;
  background:
    radial-gradient(ellipse 320px 240px at 0 100%, #c6c7cb, rgba(198,199,203,0)),
    linear-gradient(#b7b8bb, #b9babd);
}
.side-head { height: 96px; flex: none; padding: 28px 20px 0; border-bottom: 2px solid #a2a2a5; }
.segment { display: flex; height: 40px; border-radius: 5px; overflow: hidden; box-shadow: 0 1px 1px #8f8f8f; }
.seg { display: flex; align-items: center; justify-content: center; }
.seg-on { width: 222px; background: #fff; }
.seg-blue { flex: 1; background: linear-gradient(#76a5f8, #2a6ff5); }
.seg-on svg { width: 32px; height: 26px; }
.seg-blue svg { width: 52px; height: 24px; }
.empty { flex: 1; display: flex; flex-direction: column; justify-content: center; text-align: center; color: #808083; padding-bottom: 2px; }
.empty p { margin: 0; }
.empty-title { font-size: 28px; line-height: 38px; }
.empty-desc { font-size: 22.400px; line-height: 30px; margin-top: 32px !important; white-space: nowrap; }

/* page */
.page {
  flex: 1;
  min-width: 0;
  padding: 0 30px;
  color: #999;
  font-family: "Liberation Serif", "Noto Sans CJK JP", serif;
  font-size: 32px;
  background: linear-gradient(to top, #eeeeee, #ffffff 40px);
}
.ghost {
  margin: 0 -24px 0 0;
  height: 259px;
  padding-top: 9px;
  text-align: right;
  color: #f5f5f5;
  font-size: 130px;
  line-height: 148px;
  font-weight: 700;
  letter-spacing: -9.200px;
  white-space: nowrap;
}
.nav-block { padding-left: 62px; }
.nav-title { margin: 0 0 10px -3px; font-size: 35px; line-height: 44px; height: 44px; }
.nav-list { margin: 0; padding: 0; list-style: none; line-height: 40px; }
.nav-list li { display: flex; align-items: center; margin-left: -36px; gap: 22px; }
.nav-list li::before { content: ""; width: 14px; height: 14px; border-radius: 50%; background: #999; margin-top: 6px; }
.dash {
  width: 1980px;
  height: 0;
  margin: 56px auto 0;
  border: 0;
  border-top: 2px dashed #dddddd;
}
.board { margin-top: 50px; border-collapse: separate; border-spacing: 4px; }
.board th { background: #999; color: #fff; font-weight: 700; height: 56px; padding: 0; line-height: 36px; }
.col-msg { width: 172px; }
.col-name { width: 128px; }
.board td { border: 2px solid #aaa; height: 59px; padding: 0 0 0 20px; line-height: 36px; }
.board .tall td { height: 73px; }
.copy {
  margin-top: 23px;
  text-align: right;
  font-size: 26px;
  line-height: 30px;
  color: #ccc;
  border-bottom: 2px solid #ccc;
}

/* dock */
.dock {
  width: 2756px;
  height: 98px;
  flex: none;
  margin: 4px 0 0 62px;
  padding: 10px 0 0 5px;
  background: #555d75;
  border-radius: 12px 12px 0 0;
  display: flex;
  align-items: flex-start;
}
.item { width: 81px; flex: none; display: flex; flex-direction: column; align-items: center; position: relative; }
.item svg { width: 72px; height: 72px; display: block; }
.item.on::after { content: ""; display: block; width: 8px; height: 8px; margin-top: 4px; border-radius: 50%; background: #000; }
.sep { width: 36px; flex: none; position: relative; display: flex; justify-content: center; }
.sep::before { content: ""; width: 2px; height: 46px; background: #2c3145; margin-top: 4px; }
.ic-sans { font-family: "Liberation Sans", "Noto Sans CJK JP", sans-serif; }
.ic-thin { font-family: Roboto, sans-serif; font-weight: 300; }
.ic-mono { font-family: "Liberation Mono", monospace; }
```
